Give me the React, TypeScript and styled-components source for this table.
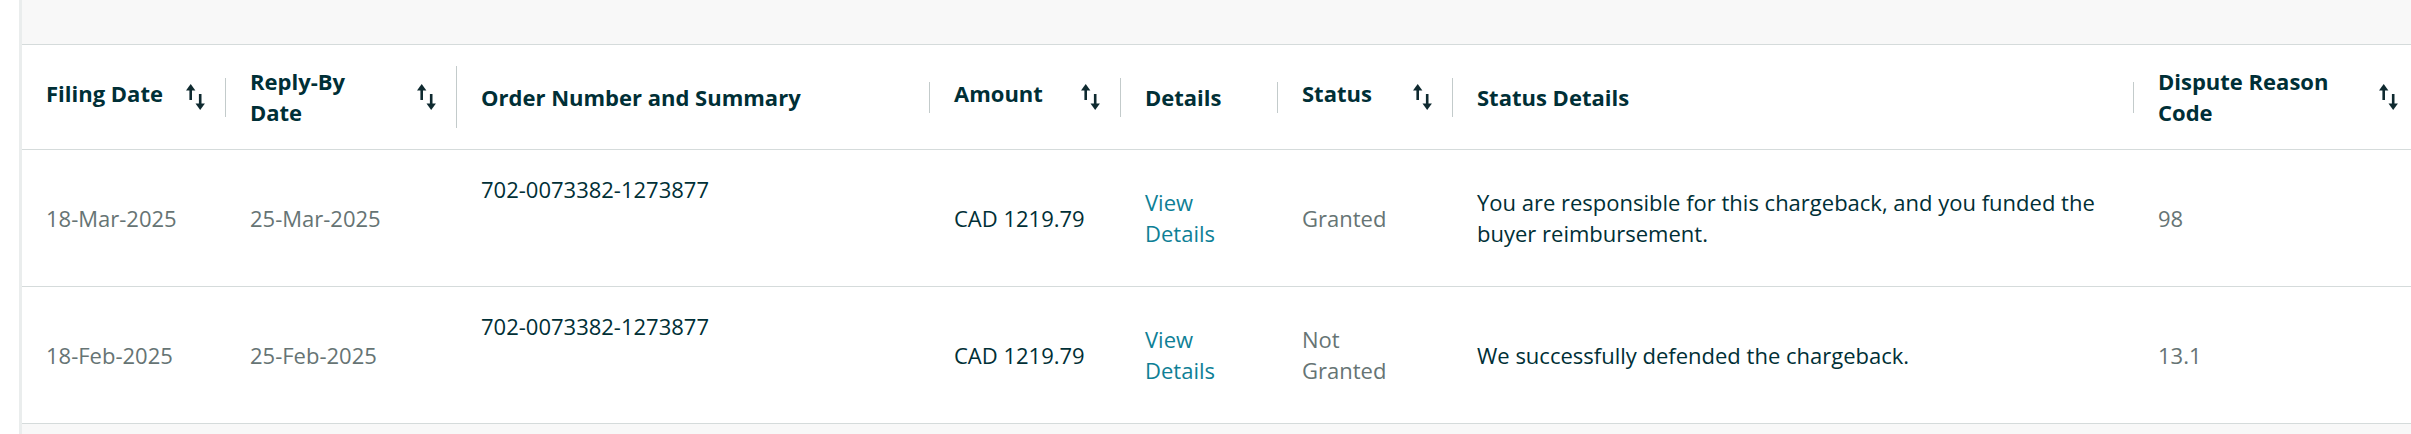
import styled, { createGlobalStyle } from 'styled-components';

const GlobalStyle = createGlobalStyle`
  html, body {
    margin: 0;
    padding: 0;
    background: #ffffff;
    overflow: hidden;
  }
  body {
    font-family: "Open Sans", "Liberation Sans", Arial, sans-serif;
  }
  *, *::before, *::after {
    box-sizing: border-box;
  }
`;

const Page = styled.div`
  display: flex;
  padding-left: 19px;
  min-height: 434px;
`;

const Panel = styled.div`
  flex: 1;
  min-width: 0;
  border-left: 3px solid #eaeded;
  background: #f8f8f8;
  padding-top: 44px;
  overflow: hidden;
`;

const Table = styled.table`
  width: 2396px;
  table-layout: fixed;
  border-collapse: collapse;
  background: #ffffff;
  font-size: 22px;
  line-height: 31px;
  color: #002f36;
`;

const Col = styled.col<{ $w: number }>`
  width: ${({ $w }) => $w}px;
`;

const HeadRow = styled.tr`
  height: 105px;
  border-top: 1px solid #d5dbdb;
  border-bottom: 1px solid #d5dbdb;
`;

const Th = styled.th`
  padding: 0 0 0 24px;
  text-align: left;
  vertical-align: middle;
  font-weight: 700;
`;

const HeadInner = styled.div<{ $last?: boolean }>`
  display: flex;
  align-items: flex-start;
  justify-content: space-between;
  gap: 12px;
  padding-right: 20px;
  border-right: ${({ $last }) => ($last ? 'none' : '1px solid #c3cbcb')};
`;

const Label = styled.span`
  white-space: pre-line;
`;

const SortBox = styled.span`
  flex-shrink: 0;
  align-self: center;
  height: 39px;
  display: flex;
  align-items: center;
`;

const Row = styled.tr`
  height: 137px;
  border-bottom: 1px solid #d5dbdb;
`;

const Td = styled.td<{ $top?: boolean; $tone?: 'muted' | 'link' }>`
  padding: ${({ $top }) => ($top ? '24px 24px 0' : '0 24px')};
  vertical-align: ${({ $top }) => ($top ? 'top' : 'middle')};
  color: ${({ $tone }) =>
    $tone === 'muted' ? '#667474' : $tone === 'link' ? '#0e7f96' : '#002f36'};
`;

const Link = styled.a`
  color: #0e7f96;
  text-decoration: none;
  cursor: pointer;
`;

const StatusText = styled.span`
  display: inline-block;
  max-width: 112px;
`;

const SortIcon = () => (
  <svg width="19" height="26" viewBox="0 0 19 26" aria-hidden="true">
    <rect x="3.4" y="5" width="2.6" height="11" fill="#0f2a30" />
    <polygon points="0,6.5 4.7,0 9.4,6.5" fill="#0f2a30" />
    <rect x="12.9" y="10" width="2.6" height="11" fill="#0f2a30" />
    <polygon points="9.5,19.5 14.2,26 18.9,19.5" fill="#0f2a30" />
  </svg>
);

const columns = [
  { label: 'Filing Date', width: 204, sortable: true },
  { label: 'Reply-By\nDate', width: 231, sortable: true },
  { label: 'Order Number and Summary', width: 473, sortable: false },
  { label: 'Amount', width: 191, sortable: true },
  { label: 'Details', width: 157, sortable: false },
  { label: 'Status', width: 175, sortable: true },
  { label: 'Status Details', width: 681, sortable: false },
  { label: 'Dispute Reason\nCode', width: 284, sortable: true },
];

const disputes = [
  {
    filed: '18-Mar-2025',
    replyBy: '25-Mar-2025',
    order: '702-0073382-1273877',
    amount: 'CAD 1219.79',
    status: 'Granted',
    details: 'You are responsible for this chargeback, and you funded the buyer reimbursement.',
    code: '98',
  },
  {
    filed: '18-Feb-2025',
    replyBy: '25-Feb-2025',
    order: '702-0073382-1273877',
    amount: 'CAD 1219.79',
    status: 'Not Granted',
    details: 'We successfully defended the chargeback.',
    code: '13.1',
  },
];

export default function App() {
  return (
    <>
      <GlobalStyle />
      <Page>
        <Panel>
          <Table>
            <colgroup>
              {columns.map((c) => (
                <Col key={c.label} $w={c.width} />
              ))}
            </colgroup>
            <thead>
              <HeadRow>
                {columns.map((c, i) => (
                  <Th key={c.label}>
                    <HeadInner $last={i === columns.length - 1}>
                      <Label>{c.label}</Label>
                      {c.sortable && (
                        <SortBox>
                          <SortIcon />
                        </SortBox>
                      )}
                    </HeadInner>
                  </Th>
                ))}
              </HeadRow>
            </thead>
            <tbody>
              {disputes.map((d, i) => (
                <Row key={i}>
                  <Td $tone="muted">{d.filed}</Td>
                  <Td $tone="muted">{d.replyBy}</Td>
                  <Td $top>{d.order}</Td>
                  <Td>{d.amount}</Td>
                  <Td>
                    <Link>View Details</Link>
                  </Td>
                  <Td $tone="muted">
                    <StatusText>{d.status}</StatusText>
                  </Td>
                  <Td>{d.details}</Td>
                  <Td $tone="muted">{d.code}</Td>
                </Row>
              ))}
            </tbody>
          </Table>
        </Panel>
      </Page>
    </>
  );
}
